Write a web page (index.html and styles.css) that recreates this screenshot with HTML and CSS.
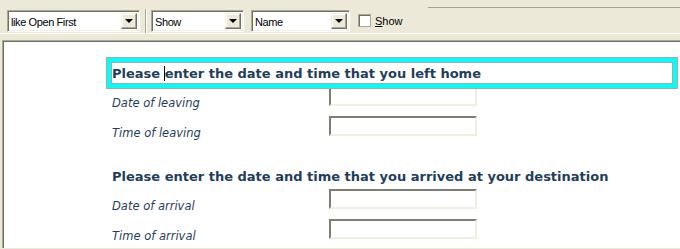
FILE: index.html
```html
<!DOCTYPE html>
<html lang="en">
<head>
    <meta charset="UTF-8">
    <title>Journey details</title>
    <link rel="stylesheet" href="styles.css">
</head>
<body>
    <div class="toolbar">
        <div class="combo combo-order">
            <span class="combo-text">like Open First</span>
            <span class="drop"></span>
        </div>
        <span class="sep"></span>
        <div class="combo combo-show">
            <span class="combo-text">Show</span>
            <span class="drop"></span>
        </div>
        <div class="combo combo-name">
            <span class="combo-text">Name</span>
            <span class="drop"></span>
        </div>
        <label class="check">
            <span class="check-box"></span>
            <span><u>S</u>how</span>
        </label>
        <span class="band"></span>
    </div>

    <div class="panel">
        <div class="section">
            <div class="section-title focused">Please <span class="caret"></span>enter the date and time that you left home</div>
            <div class="row">
                <span class="label">Date of leaving</span>
                <input type="text" class="field">
            </div>
            <div class="row">
                <span class="label">Time of leaving</span>
                <input type="text" class="field">
            </div>
        </div>

        <div class="section">
            <div class="section-title">Please enter the date and time that you arrived at your destination</div>
            <div class="row">
                <span class="label">Date of arrival</span>
                <input type="text" class="field">
            </div>
            <div class="row">
                <span class="label">Time of arrival</span>
                <input type="text" class="field">
            </div>
        </div>
    </div>
</body>
</html>
```

FILE: styles.css
```css
body {
    margin: 0;
    height: 100vh;
    background-color: #ece9d8;
    font-family: "Liberation Sans", Arial, sans-serif;
    overflow: hidden;
}
.toolbar {
    display: flex;
    align-items: flex-start;
    height: 34px;
    box-sizing: border-box;
    padding: 10px 0 0 7px;
    border-bottom: 1px solid #ffffff;
}
.combo {
    display: flex;
    align-items: center;
    height: 22px;
    box-sizing: border-box;
    background-color: #ffffff;
    border: 1px solid;
    border-color: #aca899 #ffffff #ffffff #aca899;
    box-shadow: inset 1px 1px #716f64, inset -1px -1px #f1efe2;
    padding: 2px 2px 2px 3px;
}
.combo-order { width: 133px; }
.combo-show { width: 93px; }
.combo-name { width: 99px; margin-left: 7px; }
.combo-text {
    flex: 1;
    font-size: 11px;
    letter-spacing: -0.4px;
    color: #000000;
    padding-top: 1px;
}
.drop {
    position: relative;
    width: 16px;
    height: 16px;
    box-sizing: border-box;
    background-color: #ece9d8;
    border: 1px solid;
    border-color: #f1efe2 #716f64 #716f64 #f1efe2;
    box-shadow: inset -1px -1px #aca899, inset 1px 1px #ffffff;
}
.drop::after {
    content: "";
    position: absolute;
    left: 3px;
    top: 5px;
    border-left: 4px solid transparent;
    border-right: 4px solid transparent;
    border-top: 4px solid #000000;
}
.sep {
    width: 1px;
    height: 24px;
    margin: -1px 4px 0 5px;
    background-color: #aca899;
    border-right: 1px solid #ffffff;
}
.check {
    display: flex;
    align-items: center;
    margin: 4px 0 0 8px;
    font-size: 11px;
    color: #000000;
}
.check-box {
    width: 13px;
    height: 13px;
    box-sizing: border-box;
    background-color: #ffffff;
    border: 1px solid #aca899;
    box-shadow: inset 1px 1px #716f64;
    margin-right: 4px;
}
.band {
    flex: 1;
    margin: -3px 0 0 25px;
    border-top: 1px solid #a5a28f;
}
.panel {
    margin: 6px 0 0 2px;
    height: 205px;
    background-color: #ffffff;
    border-top: 1px solid #aca899;
    border-left: 1px solid #aca899;
    box-shadow: inset 1px 1px #716f64;
    padding: 2px 3px 0 104px;
    font-family: "DejaVu Sans", Verdana, sans-serif;
    color: #1f3e5b;
    overflow: hidden;
}
.section {
    margin-top: 15px;
}
.section-title {
    position: relative;
    z-index: 1;
    height: 30px;
    box-sizing: border-box;
    border: 4px solid transparent;
    padding-left: 1px;
    margin-bottom: -2px;
    font-size: 13px;
    font-weight: bold;
    line-height: 23px;
    white-space: nowrap;
}
.section-title.focused {
    border-color: #00ffff;
    box-shadow: 0 0 0 1px #aca899, inset 0 0 0 1px #aca899;
    background-color: #ffffff;
}
.caret {
    display: inline-block;
    width: 1px;
    height: 15px;
    margin-left: -1px;
    background-color: #000000;
    vertical-align: -3px;
}
.row {
    display: flex;
    align-items: flex-start;
    height: 30px;
    padding-left: 5px;
}
.label {
    width: 217px;
    padding-top: 9px;
    font-size: 11.5px;
    font-style: italic;
    line-height: 16px;
}
.field {
    width: 148px;
    height: 20px;
    box-sizing: border-box;
    margin: 0;
    padding: 0;
    border: 2px solid;
    border-color: #7f7d74 #f1efe2 #f1efe2 #7f7d74;
    background-color: #ffffff;
    outline: none;
}
```
